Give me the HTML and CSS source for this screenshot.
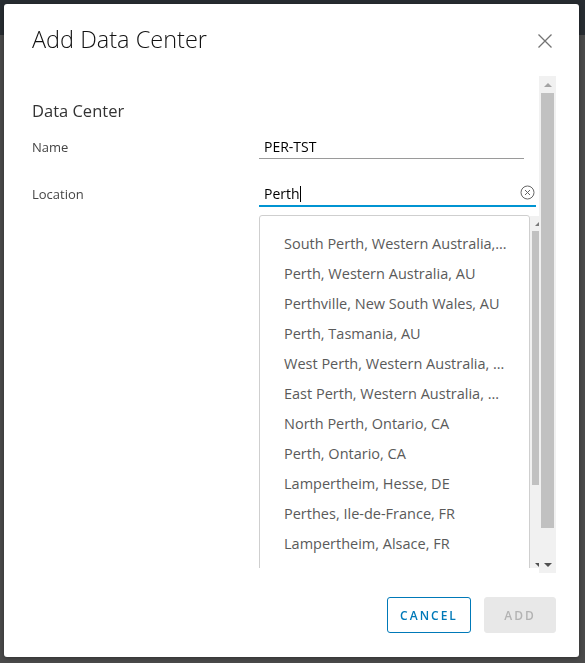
FILE: index.html
```html
<!DOCTYPE html>
<html>
<head>
<meta charset="utf-8">
<link rel="stylesheet" href="styles.css">
</head>
<body>
<div class="page">
  <div class="topbar"></div>
</div>
<div class="modal">
  <div class="modal-header">
    <h3 class="modal-title">Add Data Center</h3>
    <button class="close" aria-label="Close">
      <svg width="16" height="16" viewBox="0 0 16 16"><path d="M1.5 1.5 L14.5 14.5 M14.5 1.5 L1.5 14.5" stroke="#737373" stroke-width="1.3" fill="none"/></svg>
    </button>
  </div>
  <div class="modal-body">
    <div class="body-content">
      <h4 class="section">Data Center</h4>
      <div class="row">
        <label class="label">Name</label>
        <div class="input name-input">PER-TST</div>
      </div>
      <div class="row row-location">
        <label class="label">Location</label>
        <div class="input loc-input">Perth<span class="caret"></span>
          <svg class="clear" width="15" height="15" viewBox="0 0 15 15"><circle cx="7.5" cy="7.5" r="6.5" stroke="#666" stroke-width="1" fill="none"/><path d="M5 5 L10 10 M10 5 L5 10" stroke="#666" stroke-width="1" fill="none"/></svg>
        </div>
      </div>
      <div class="dropdown">
        <div class="item">South Perth, Western Australia,…</div>
        <div class="item">Perth, Western Australia, AU</div>
        <div class="item">Perthville, New South Wales, AU</div>
        <div class="item">Perth, Tasmania, AU</div>
        <div class="item">West Perth, Western Australia, …</div>
        <div class="item">East Perth, Western Australia, …</div>
        <div class="item">North Perth, Ontario, CA</div>
        <div class="item">Perth, Ontario, CA</div>
        <div class="item">Lampertheim, Hesse, DE</div>
        <div class="item">Perthes, Ile-de-France, FR</div>
        <div class="item">Lampertheim, Alsace, FR</div>
        <div class="item">Perth Amboy, New Jersey, US</div>
      </div>
      <div class="dd-scroll">
        <div class="sb-btn"><span class="tri-up dark"></span></div>
        <div class="dd-thumb"></div>
        <div class="sb-fill"></div>
        <div class="sb-btn"><span class="tri-down"></span></div>
      </div>
    </div>
    <div class="vscroll">
      <div class="sb-btn big"><span class="tri-up"></span></div>
      <div class="thumb"></div>
      <div class="sb-fill"></div>
      <div class="sb-btn big"><span class="tri-down"></span></div>
    </div>
  </div>
  <div class="modal-footer">
    <button class="btn btn-outline">CANCEL</button>
    <button class="btn btn-disabled">ADD</button>
  </div>
</div>
</body>
</html>
```
FILE: styles.css
```css
* { box-sizing: border-box; }
html, body { margin: 0; padding: 0; }
body {
  width: 585px;
  height: 663px;
  background: #4a4a4a;
  font-family: "Open Sans", "Liberation Sans", sans-serif;
  overflow: hidden;
}
.topbar { height: 35px; background: #272c31; }

.modal {
  position: fixed;
  left: 4px;
  top: 4px;
  width: 575px;
  height: 653px;
  background: #fff;
  border-radius: 3px;
  display: flex;
  flex-direction: column;
  box-shadow: 0 1px 4px rgba(0,0,0,0.35);
}
.modal-header {
  height: 72px;
  flex: none;
  display: flex;
  justify-content: space-between;
  align-items: flex-start;
  padding: 20px 26px 0 28px;
}
.modal-title {
  margin: 0;
  font-size: 23.5px;
  font-weight: 300;
  line-height: 30px;
  color: #111;
}
.close {
  margin-top: 9px;
  padding: 0;
  border: 0;
  background: none;
  width: 16px;
  height: 16px;
  display: block;
}
.close svg { display: block; }

.modal-body {
  height: 497px;
  flex: none;
  display: flex;
  padding-right: 23px;
}
.body-content {
  flex: 1;
  height: 492px;
  position: relative;
  overflow: hidden;
  padding: 23px 0 0 28px;
}
.section {
  margin: 0 0 12px;
  font-size: 16.5px;
  font-weight: 400;
  line-height: 24px;
  color: #333;
}
.row {
  display: flex;
  align-items: flex-start;
}
.row-location { margin-top: 23px; }
.label {
  width: 227px;
  flex: none;
  font-size: 13px;
  line-height: 24px;
  color: #454545;
}
.input {
  position: relative;
  height: 24px;
  padding-left: 5px;
  font-size: 14px;
  line-height: 24px;
  color: #000;
  border-bottom: 1px solid #9a9a9a;
}
.name-input { width: 265px; }
.loc-input {
  width: 277px;
  height: 25px;
  border-bottom: 2px solid #0094d2;
}
.caret {
  display: inline-block;
  width: 1px;
  height: 16px;
  background: #000;
  vertical-align: -3px;
}
.clear {
  position: absolute;
  right: 1px;
  top: 3px;
}

.dropdown {
  position: absolute;
  left: 255px;
  top: 139px;
  width: 271px;
  height: 440px;
  border: 1px solid #cfcfcf;
  border-radius: 3px;
  background: #fff;
  padding: 13px 24px 0 24px;
}
.item {
  font-size: 14.5px;
  line-height: 30px;
  color: #5a5a5a;
  white-space: nowrap;
}
.dd-scroll {
  position: absolute;
  left: 526px;
  top: 140px;
  width: 17px;
  height: 357px;
  background: #f1f1f1;
  display: flex;
  flex-direction: column;
}
.dd-scroll .sb-btn { height: 15px; }
.dd-scroll .sb-btn:last-child { height: 17px; }
.dd-thumb {
  height: 254px;
  margin: 0 2px;
  background: #c1c1c1;
}

.vscroll {
  width: 17px;
  flex: none;
  height: 497px;
  background: #f1f1f1;
  display: flex;
  flex-direction: column;
}
.sb-btn {
  height: 17px;
  flex: none;
  display: flex;
  align-items: center;
  justify-content: center;
}
.sb-fill { flex: 1; }
.thumb {
  height: 435px;
  flex: none;
  margin: 0 2px;
  background: #c1c1c1;
}
.tri-up {
  width: 0; height: 0;
  border-left: 4px solid transparent;
  border-right: 4px solid transparent;
  border-bottom: 4px solid #a3a3a3;
}
.tri-up.dark { border-bottom-color: #7a7a7a; }
.tri-down {
  width: 0; height: 0;
  border-left: 4px solid transparent;
  border-right: 4px solid transparent;
  border-top: 4px solid #505050;
}

.modal-footer {
  flex: 1;
  display: flex;
  justify-content: flex-end;
  align-items: flex-start;
  gap: 13px;
  padding: 24px 23px 0 0;
}
.btn {
  height: 36px;
  line-height: 35px;
  padding: 0;
  border-radius: 3px;
  font-family: "Open Sans", "Liberation Sans", sans-serif;
  font-size: 12px;
  font-weight: 600;
  letter-spacing: 2px;
  text-align: center;
}
.btn-outline {
  width: 84px;
  border: 1px solid #0079b8;
  background: #fff;
  color: #0079b8;
}
.btn-disabled {
  width: 72px;
  border: 1px solid #e8e8e8;
  background: #e8e8e8;
  color: #b3b3b3;
}
```
